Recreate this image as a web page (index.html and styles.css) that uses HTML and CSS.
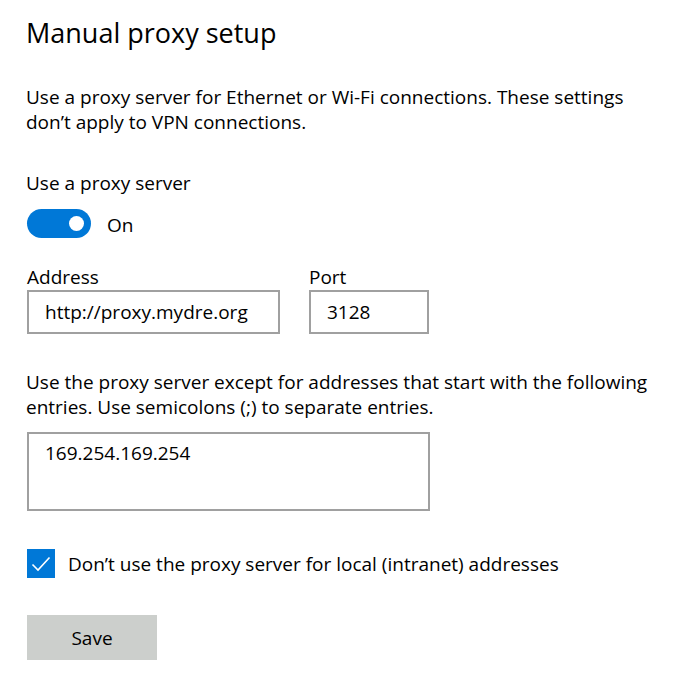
FILE: index.html
```html
<!DOCTYPE html>
<html lang="en">
<head>
    <meta charset="UTF-8">
    <meta name="viewport" content="width=device-width, initial-scale=1.0">
    <title>Proxy</title>
    <link rel="stylesheet" href="styles.css">
</head>
<body>
    <div class="page">
        <h1 class="title">Manual proxy setup</h1>
        <p class="intro">Use a proxy server for Ethernet or Wi-Fi connections. These settings don’t apply to VPN connections.</p>

        <div class="label-top">Use a proxy server</div>
        <div class="toggle-row">
            <span class="toggle"><span class="knob"></span></span>
            <span class="toggle-text">On</span>
        </div>

        <div class="fields">
            <div class="field">
                <label for="address">Address</label>
                <input type="text" id="address" class="box address" value="http://proxy.mydre.org">
            </div>
            <div class="field">
                <label for="port">Port</label>
                <input type="text" id="port" class="box port" value="3128">
            </div>
        </div>

        <p class="except">Use the proxy server except for addresses that start with the following entries. Use semicolons (;) to separate entries.</p>
        <textarea class="box entries">169.254.169.254</textarea>

        <div class="check-row">
            <span class="check">
                <svg width="20" height="16" viewBox="0 0 20 16"><path d="M1.5 8.5 L7 14 L18.5 1.5" fill="none" stroke="#fff" stroke-width="1.6"/></svg>
            </span>
            <span class="check-text">Don’t use the proxy server for local (intranet) addresses</span>
        </div>

        <button class="save">Save</button>
    </div>
</body>
</html>
```

FILE: styles.css
```css
body {
    margin: 0;
    background: #fff;
    color: #000;
    font-family: "Open Sans", "Noto Sans", sans-serif;
}
.page {
    padding: 16px 0 0 26px;
}
.title {
    margin: 0;
    font-size: 27px;
    font-weight: 400;
    line-height: 34px;
}
.intro, .except {
    margin: 35px 0 0;
    font-size: 19px;
    line-height: 25px;
    max-width: 655px;
}
.intro {
    max-width: 635px;
}
.label-top {
    margin-top: 36px;
    font-size: 19px;
    line-height: 25px;
}
.toggle-row {
    display: flex;
    align-items: center;
    gap: 16px;
    margin-top: 13px;
    padding-left: 1px;
}
.toggle {
    width: 64px;
    height: 29px;
    border-radius: 15px;
    background: #0078d7;
    display: flex;
    align-items: center;
    justify-content: flex-end;
    padding-right: 7px;
    box-sizing: border-box;
}
.knob {
    width: 15px;
    height: 15px;
    border-radius: 50%;
    background: #fff;
}
.toggle-text {
    font-size: 19px;
    padding-top: 3px;
}
.fields {
    display: flex;
    gap: 29px;
    margin-top: 27px;
    padding-left: 1px;
}
.field label {
    display: block;
    font-size: 19px;
    line-height: 24px;
    margin-bottom: 1px;
}
.box {
    font-family: inherit;
    font-size: 19px;
    color: #000;
    border: 2px solid #a0a0a0;
    box-sizing: border-box;
    padding: 0 16px;
    height: 44px;
    outline: none;
}
.address {
    width: 253px;
}
.port {
    width: 120px;
}
.except {
    margin-top: 36px;
}
.entries {
    display: block;
    margin: 12px 0 0 1px;
    width: 403px;
    height: 79px;
    padding: 8px 16px;
    line-height: 22px;
    resize: none;
}
.check-row {
    display: flex;
    align-items: center;
    gap: 13px;
    margin-top: 38px;
    padding-left: 1px;
}
.check {
    width: 28px;
    height: 29px;
    background: #0078d7;
    display: flex;
    align-items: center;
    justify-content: center;
}
.check-text {
    font-size: 19px;
}
.save {
    display: block;
    margin: 37px 0 0 1px;
    width: 130px;
    height: 45px;
    border: none;
    background: #cccfcc;
    font-family: inherit;
    font-size: 19px;
    color: #000;
}
```
